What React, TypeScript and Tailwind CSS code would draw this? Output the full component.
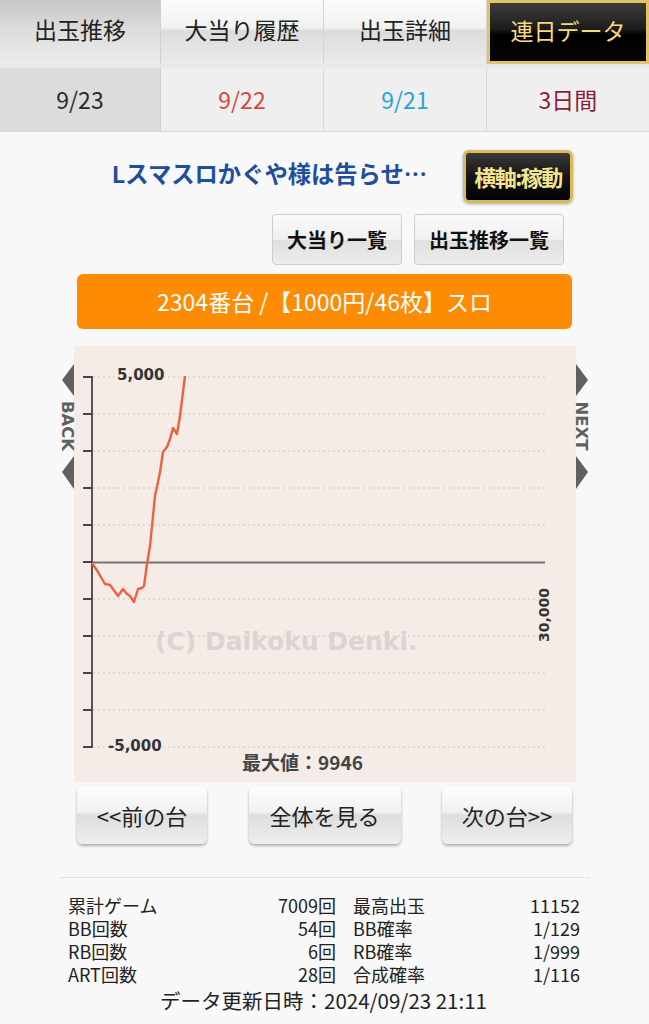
import React from "react";

const FONT = '"Noto Sans CJK JP", "Noto Sans", sans-serif';

const pts: [number, number][] = [
  [92, 564], [98, 573], [102, 580], [105, 585], [110, 586], [113, 590], [118, 597],
  [123, 590], [127, 595], [130, 597], [134, 603], [138, 590], [142, 589], [144, 587],
  [147, 565], [150, 547], [152, 527], [155, 497], [158, 483], [160, 473], [163, 453],
  [167, 448], [170, 440], [173, 429], [175, 432], [177, 435], [180, 417], [183, 393],
  [185, 377],
];

const ticks = Array.from({ length: 11 }, (_, i) => 378 + i * 37);

function Chart() {
  return (
    <svg width={535} height={436} viewBox="56 347 535 436" className="block">
      <rect x={74} y={347} width={502} height={436} fill="#f5ece8" />
      {ticks.map((y, i) =>
        i === 5 ? null : (
          <line
            key={"g" + i}
            x1={93}
            x2={545}
            y1={y}
            y2={y}
            stroke="#cfc4c2"
            strokeWidth={1}
            strokeDasharray="2 3"
          />
        )
      )}
      <line x1={92} x2={545} y1={563.5} y2={563.5} stroke="#7a7272" strokeWidth={2} />
      <line x1={92} x2={92} y1={377} y2={749} stroke="#555" strokeWidth={2} />
      {ticks.map((y, i) => (
        <line key={"t" + i} x1={83} x2={92} y1={y} y2={y} stroke="#444" strokeWidth={2} />
      ))}
      <text x={117} y={381} fontFamily="DejaVu Sans, sans-serif" fontWeight="bold" fontSize={15} fill="#333">
        5,000
      </text>
      <text x={108} y={752} fontFamily="DejaVu Sans, sans-serif" fontWeight="bold" fontSize={15} fill="#333">
        -5,000
      </text>
      <text
        x={0}
        y={0}
        transform="translate(549 616) rotate(-90)"
        textAnchor="middle"
        fontFamily="DejaVu Sans, sans-serif"
        fontWeight="bold"
        fontSize={14}
        fill="#333"
      >
        30,000
      </text>
      <text
        x={155}
        y={651}
        fontFamily="DejaVu Sans, sans-serif"
        fontWeight="bold"
        fontSize={25}
        fill="#dbd4d2"
      >
        (C) Daikoku Denki.
      </text>
      <text x={242} y={771} fontFamily={FONT} fontWeight={700} fontSize={19} fill="#444">
        最大値：9946
      </text>
      <polyline
        points={pts.map((p) => p.join(",")).join(" ")}
        fill="none"
        stroke="#f0603e"
        strokeWidth={2.4}
        strokeLinejoin="round"
      />
      {/* BACK */}
      <polygon points="62,381 74,365 74,397" fill="#5f6160" />
      <polygon points="62,473 74,457 74,490" fill="#5f6160" />
      <text
        x={0}
        y={0}
        transform="translate(61.5 427) rotate(90)"
        textAnchor="middle"
        fontFamily="DejaVu Sans, sans-serif"
        fontWeight="bold"
        fontSize={16.5}
        fill="#5f6160"
      >
        BACK
      </text>
      {/* NEXT */}
      <polygon points="588,381 576,365 576,397" fill="#5f6160" />
      <polygon points="588,473 576,457 576,490" fill="#5f6160" />
      <text
        x={0}
        y={0}
        transform="translate(575.5 427) rotate(90)"
        textAnchor="middle"
        fontFamily="DejaVu Sans, sans-serif"
        fontWeight="bold"
        fontSize={16.5}
        fill="#5f6160"
      >
        NEXT
      </text>
    </svg>
  );
}

function Stat({ label, value }: { label: string; value: string }) {
  return (
    <div className="flex justify-between h-[23px] items-center">
      <span className="leading-[23px]">{label}</span>
      <span className="leading-[23px]">{value}</span>
    </div>
  );
}

export default function App() {
  return (
    <div className="w-[649px] min-h-[1024px] bg-[#f8f8f8] text-[#222]" style={{ fontFamily: FONT }}>
      {/* Tabs */}
      <div className="grid grid-cols-[161px_163px_163px_162px] h-[64px]">
        <div className="flex items-center justify-center border-r border-[#cfcfcf] bg-[linear-gradient(to_bottom,#c6c6c6_0%,#dcdcdc_45%,#ececec_100%)] text-[23px] pb-[6px]">
          出玉推移
        </div>
        <div className="flex items-center justify-center border-r border-[#d4d4d4] bg-[linear-gradient(to_bottom,#fbfbfb_0%,#f1f1f1_44%,#dcdcdc_48%,#ebebeb_100%)] text-[23px] pb-[6px]">
          大当り履歴
        </div>
        <div className="flex items-center justify-center border-r border-[#d4d4d4] bg-[linear-gradient(to_bottom,#fbfbfb_0%,#f1f1f1_44%,#dcdcdc_48%,#ebebeb_100%)] text-[23px] pb-[6px]">
          出玉詳細
        </div>
        <div className="flex items-center justify-center border-[3px] border-[#e3c463] bg-[linear-gradient(to_bottom,#3d3d3d_0%,#1c1c1c_45%,#000_55%,#050505_100%)] text-[23px] text-[#f7da7c] pb-[4px]">
          連日データ
        </div>
      </div>
      <div className="h-[4px] bg-[#e9e9e9]" />
      <div className="grid grid-cols-[161px_163px_163px_162px] h-[64px] border-b border-[#d8d8d8]">
        <div className="flex items-center justify-center border-r border-[#cfcfcf] bg-[#dcdcdc] text-[23px] text-[#2a2a2a]">
          9/23
        </div>
        <div className="flex items-center justify-center border-r border-[#d8d8d8] bg-[#efefef] text-[23px] text-[#d8463f]">
          9/22
        </div>
        <div className="flex items-center justify-center border-r border-[#d8d8d8] bg-[#efefef] text-[23px] text-[#2aa2da]">
          9/21
        </div>
        <div className="flex items-center justify-center bg-[#efefef] text-[23px] text-[#8c1c3e]">
          3日間
        </div>
      </div>

      {/* Title row */}
      <div className="flex items-center justify-end gap-[36px] pr-[76px] mt-[18px]">
        <div className="text-[23.3px] font-bold text-[#1d4f9e] mt-[-6px]">
          Lスマスロかぐや様は告らせ…
        </div>
        <div className="h-[53px] w-[110px] flex items-center justify-center rounded-[6px] border-[3px] border-[#dcba55] bg-[linear-gradient(to_bottom,#3a3a3a_0%,#151515_50%,#000_100%)] text-[#f5e48f] text-[22px] font-bold tracking-[-1.5px] shadow-[0_1px_3px_rgba(0,0,0,0.35)]">
          横軸:稼動
        </div>
      </div>

      {/* Sub buttons */}
      <div className="flex justify-end gap-[12px] pr-[85px] mt-[11px]">
        <div className="h-[51px] w-[130px] flex items-center justify-center rounded-[4px] border border-[#cdcdcd] bg-[linear-gradient(to_bottom,#fafafa_0%,#f0f0f0_50%,#e0e0e0_52%,#ececec_100%)] text-[20px] font-bold text-[#111]">
          大当り一覧
        </div>
        <div className="h-[51px] w-[150px] flex items-center justify-center rounded-[4px] border border-[#cdcdcd] bg-[linear-gradient(to_bottom,#fafafa_0%,#f0f0f0_50%,#e0e0e0_52%,#ececec_100%)] text-[20px] font-bold text-[#111]">
          出玉推移一覧
        </div>
      </div>

      {/* Orange bar */}
      <div className="mx-[77px] mt-[9px] h-[55px] rounded-[6px] bg-[#fd8c04] flex items-center justify-center text-white text-[23px]">
        2304番台 /【1000円/46枚】スロ
      </div>

      {/* Chart */}
      <div className="mt-[17px] ml-[56px]">
        <Chart />
      </div>

      {/* Nav buttons */}
      <div className="flex justify-between px-[77px] mt-[4px]">
        <div className="h-[58px] w-[130px] flex items-center justify-center rounded-[6px] bg-[linear-gradient(to_bottom,#fdfdfd_0%,#f1f1f1_45%,#dedede_50%,#eeeeee_100%)] shadow-[0_2px_3px_rgba(0,0,0,0.3)] text-[22px]">
          &lt;&lt;前の台
        </div>
        <div className="h-[58px] w-[152px] flex items-center justify-center rounded-[6px] bg-[linear-gradient(to_bottom,#fdfdfd_0%,#f1f1f1_45%,#dedede_50%,#eeeeee_100%)] shadow-[0_2px_3px_rgba(0,0,0,0.3)] text-[22px]">
          全体を見る
        </div>
        <div className="h-[58px] w-[130px] flex items-center justify-center rounded-[6px] bg-[linear-gradient(to_bottom,#fdfdfd_0%,#f1f1f1_45%,#dedede_50%,#eeeeee_100%)] shadow-[0_2px_3px_rgba(0,0,0,0.3)] text-[22px]">
          次の台&gt;&gt;
        </div>
      </div>

      {/* Separator */}
      <div className="mt-[33px] ml-[60px] mr-[59px] border-t border-dotted border-[#cfcfcf]" />

      {/* Stats */}
      <div className="grid grid-cols-[268px_227px] gap-x-[17px] ml-[68px] mt-[16px] text-[18px] text-[#222]">
        <Stat label="累計ゲーム" value="7009回" />
        <Stat label="最高出玉" value="11152" />
        <Stat label="BB回数" value="54回" />
        <Stat label="BB確率" value="1/129" />
        <Stat label="RB回数" value="6回" />
        <Stat label="RB確率" value="1/999" />
        <Stat label="ART回数" value="28回" />
        <Stat label="合成確率" value="1/116" />
      </div>
      <div className="text-center text-[20.5px] leading-[28px] text-[#222] pr-[2px]">
        データ更新日時：2024/09/23 21:11
      </div>
    </div>
  );
}
